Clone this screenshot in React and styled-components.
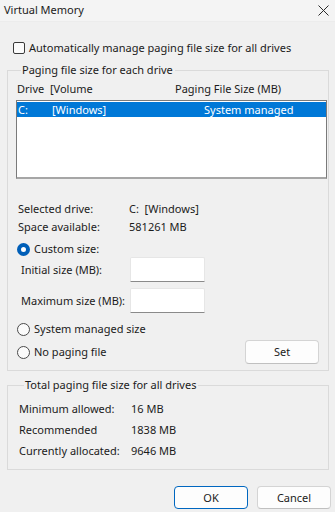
import React from "react";
import styled, { createGlobalStyle } from "styled-components";

const Global = createGlobalStyle`
  html, body { margin: 0; padding: 0; background: #f0f0f0; }
  body {
    font-family: "Segoe UI", "Noto Sans", "Open Sans", sans-serif;
    font-size: 11px;
    color: #1b1b1b;
    width: 335px;
    height: 512px;
    overflow: hidden;
  }
  * { box-sizing: border-box; }
`;

const Window = styled.div`
  width: 335px;
  height: 512px;
  display: flex;
  flex-direction: column;
  background: #f0f0f0;
`;

const TitleBar = styled.div`
  height: 22px;
  background: #f4f4f4;
  border-bottom: 1px solid #ececec;
  display: flex;
  align-items: center;
  justify-content: space-between;
  padding: 0 6px 1px 4px;
  line-height: 16px;
`;

const Title = styled.span`
  font-size: 11px;
  color: #1b1b1b;
`;

const CloseIcon = styled.svg`
  width: 11px;
  height: 11px;
  display: block;
`;

const Body = styled.div`
  display: flex;
  flex-direction: column;
  padding: 0 6px 0 7px;
`;

const CheckRow = styled.label`
  display: flex;
  align-items: center;
  gap: 4px;
  height: 16px;
  margin: 18px 0 0 6px;
  line-height: 16px;
`;

const CheckBox = styled.span`
  width: 12px;
  height: 12px;
  border: 1px solid #3a3a3a;
  border-radius: 2px;
  background: #fbfbfb;
  display: inline-block;
`;

const Group = styled.fieldset`
  margin: ${(p) => p.$mt}px 0 0 0;
  padding: 0 ${(p) => p.$pr}px ${(p) => p.$pb}px ${(p) => p.$pl}px;
  border: 1px solid #dadada;
  min-width: 0;
`;

const Legend = styled.legend`
  padding: 0 2px 0 1px;
  margin-left: 5px;
  line-height: 16px;
  height: 16px;
`;

const HeaderRow = styled.div`
  display: grid;
  grid-template-columns: 158px 1fr;
  padding-left: 1px;
  line-height: 16px;
  margin-top: 3px;
`;

const ListBox = styled.div`
  margin-top: 3px;
  height: 79px;
  background: #ffffff;
  border: 1px solid #7a7a7a;
  border-bottom: 2px solid #a6a6a6;
  padding: 1px 0 0 0;
`;

const ListRow = styled.div`
  display: grid;
  grid-template-columns: 34px 152px 1fr;
  height: 15px;
  line-height: 15px;
  background: ${(p) => (p.$selected ? "#0078d7" : "transparent")};
  color: ${(p) => (p.$selected ? "#ffffff" : "#1b1b1b")};
  padding-left: 1px;
`;

const InfoRow = styled.div`
  display: grid;
  grid-template-columns: ${(p) => p.$col}px 1fr;
  height: ${(p) => p.$h}px;
  align-items: center;
  padding-left: ${(p) => p.$pl}px;
  margin-top: ${(p) => p.$mt || 0}px;
`;

const RadioRow = styled.label`
  display: flex;
  align-items: center;
  gap: 4px;
  height: 16px;
  line-height: 16px;
  padding-left: 1px;
  margin-top: ${(p) => p.$mt || 0}px;
`;

const Radio = styled.span`
  width: 13px;
  height: 13px;
  border-radius: 50%;
  display: inline-block;
  flex: none;
  ${(p) =>
    p.$checked
      ? `background: #ffffff; border: 4px solid #005fb8;`
      : `background: #fbfbfb; border: 1px solid #4a4a4a;`}
`;

const FieldRow = styled.div`
  display: grid;
  grid-template-columns: 109px 75px;
  align-items: center;
  height: 25px;
  padding-left: 5px;
  margin-top: ${(p) => p.$mt || 0}px;
  white-space: nowrap;
`;

const TextInput = styled.div`
  height: 25px;
  width: 75px;
  background: #ffffff;
  border: 1px solid #e6e6e6;
  border-bottom: 1px solid #8a8a8a;
  border-radius: 2px 2px 0 0;
`;

const SplitRow = styled.div`
  display: flex;
  align-items: center;
  justify-content: space-between;
  margin-top: 3px;
  padding-right: 8px;
`;

const Button = styled.button`
  font: inherit;
  color: #1b1b1b;
  width: 74px;
  height: ${(p) => p.$h || 24}px;
  background: #fdfdfd;
  border: 1px solid ${(p) => (p.$primary ? "#0067c0" : "#d4d4d4")};
  border-bottom-color: ${(p) => (p.$primary ? "#0067c0" : "#c0c0c0")};
  border-radius: 4px;
  padding: 0;
  line-height: 16px;
`;

const Footer = styled.div`
  display: flex;
  justify-content: flex-end;
  gap: 9px;
  padding-right: 4px;
  margin-top: 16px;
`;

export default function App() {
  return (
    <>
      <Global />
      <Window>
        <TitleBar>
          <Title>Virtual Memory</Title>
          <CloseIcon viewBox="0 0 11 11">
            <path d="M0.5 0.5 L10.5 10.5 M10.5 0.5 L0.5 10.5" stroke="#2b2b2b" strokeWidth="1" fill="none" />
          </CloseIcon>
        </TitleBar>
        <Body>
          <CheckRow>
            <CheckBox />
            <span>Automatically manage paging file size for all drives</span>
          </CheckRow>

          <Group $mt={6} $pl={8} $pr={1} $pb={6}>
            <Legend>Paging file size for each drive</Legend>
            <HeaderRow>
              <span>Drive&nbsp;&nbsp;[Volume</span>
              <span>Paging File Size (MB)</span>
            </HeaderRow>
            <ListBox>
              <ListRow $selected>
                <span>C:</span>
                <span>[Windows]</span>
                <span>System managed</span>
              </ListRow>
            </ListBox>
            <InfoRow $col={111} $h={18} $pl={2} $mt={20}>
              <span>Selected drive:</span>
              <span>C:&nbsp;&nbsp;[Windows]</span>
            </InfoRow>
            <InfoRow $col={111} $h={18} $pl={2}>
              <span>Space available:</span>
              <span>581261 MB</span>
            </InfoRow>
            <RadioRow $mt={6}>
              <Radio $checked />
              <span>Custom size:</span>
            </RadioRow>
            <FieldRow>
              <span>Initial size (MB):</span>
              <TextInput />
            </FieldRow>
            <FieldRow $mt={6}>
              <span>Maximum size (MB):</span>
              <TextInput />
            </FieldRow>
            <RadioRow $mt={8}>
              <Radio />
              <span>System managed size</span>
            </RadioRow>
            <SplitRow>
              <RadioRow>
                <Radio />
                <span>No paging file</span>
              </RadioRow>
              <Button type="button">Set</Button>
            </SplitRow>
          </Group>

          <Group $mt={6} $pl={11} $pr={1} $pb={8}>
            <Legend>Total paging file size for all drives</Legend>
            <InfoRow $col={112} $h={21} $pl={0} $mt={5}>
              <span>Minimum allowed:</span>
              <span>16 MB</span>
            </InfoRow>
            <InfoRow $col={112} $h={21} $pl={0}>
              <span>Recommended</span>
              <span>1838 MB</span>
            </InfoRow>
            <InfoRow $col={112} $h={21} $pl={0}>
              <span>Currently allocated:</span>
              <span>9646 MB</span>
            </InfoRow>
          </Group>
        </Body>
        <Footer>
          <Button type="button" $primary $h={23}>OK</Button>
          <Button type="button" $h={23}>Cancel</Button>
        </Footer>
      </Window>
    </>
  );
}
